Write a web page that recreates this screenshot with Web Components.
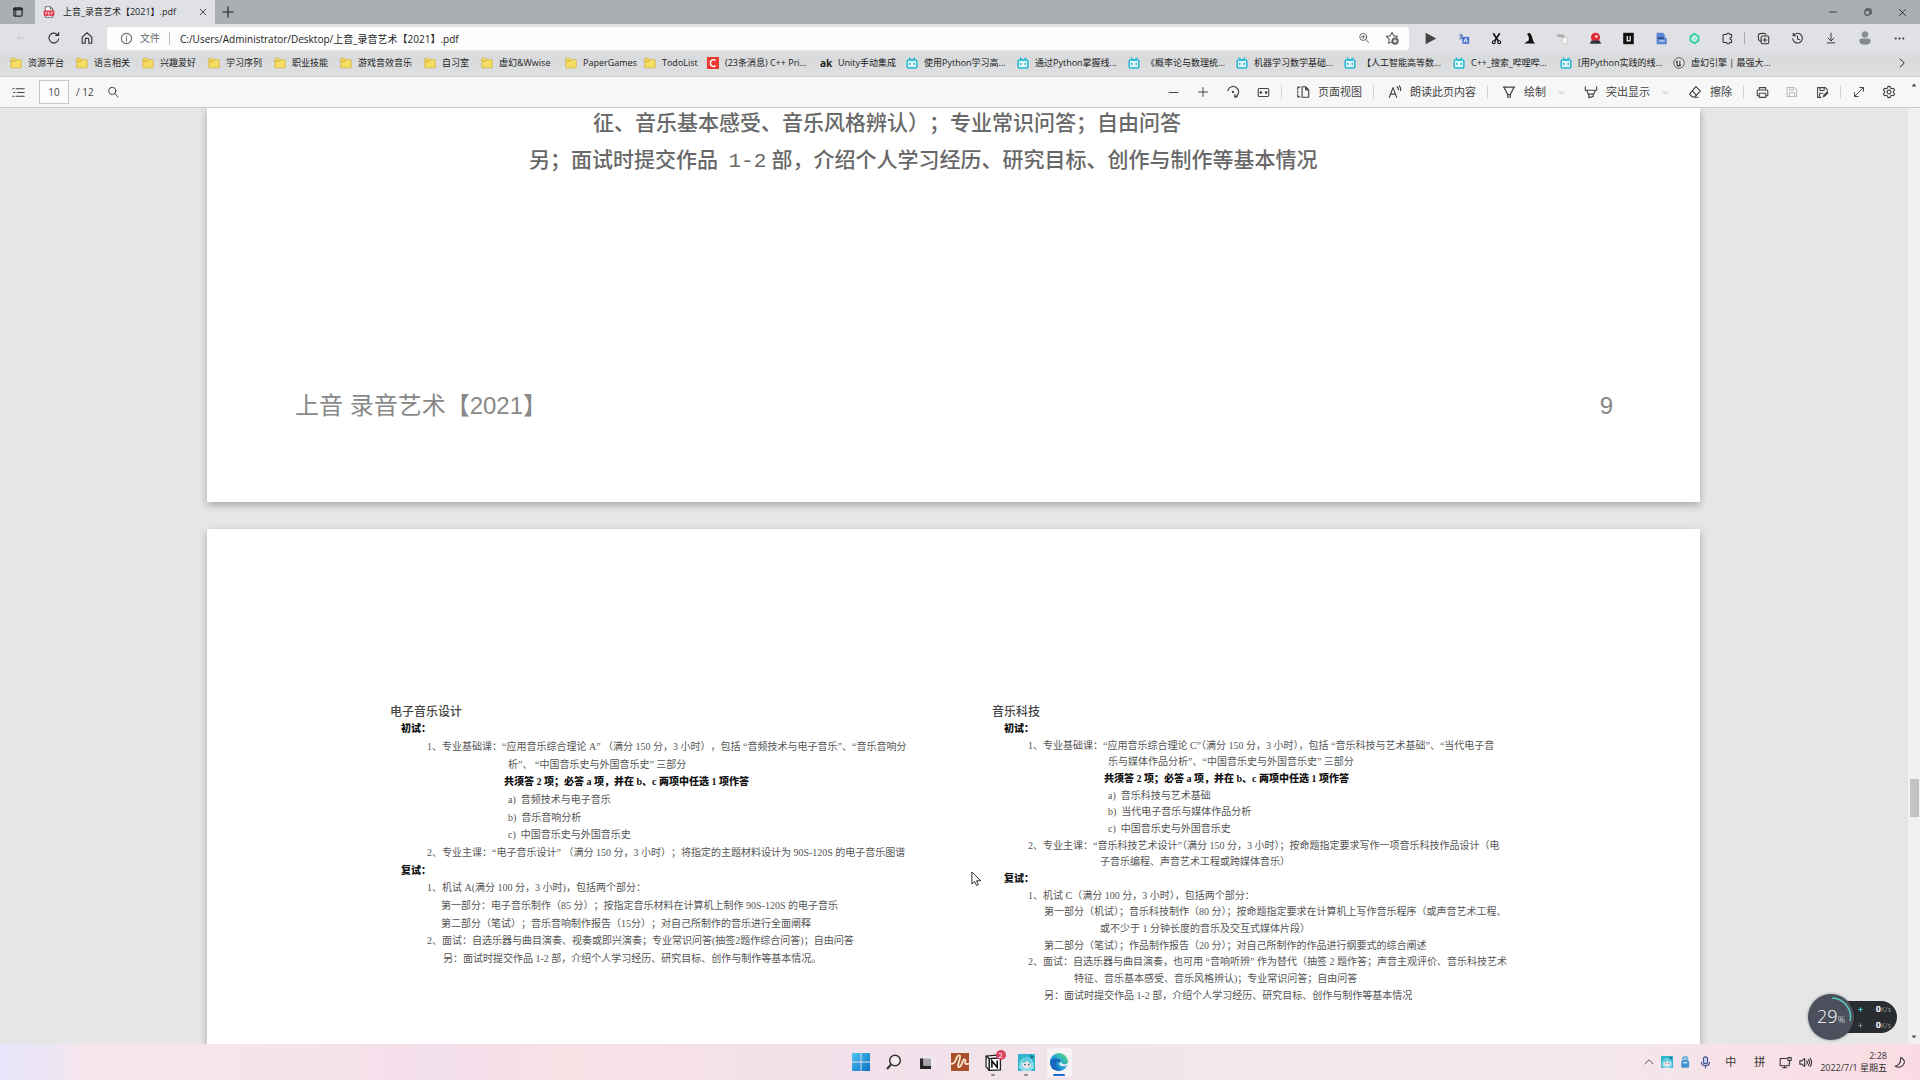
<!DOCTYPE html>
<html lang="zh-CN">
<head>
<meta charset="utf-8">
<title>上音_录音艺术【2021】.pdf</title>
<style>
html,body{height:100%}
body{margin:0;overflow:hidden;font-family:"Open Sans","Noto Sans CJK SC",sans-serif;font-size:9px;color:#222;text-spacing-trim:space-all}
</style>
</head>
<body>
<desktop-screen></desktop-screen>
<script>
const S='fill="none" stroke="currentColor" stroke-width="1.3" stroke-linecap="round" stroke-linejoin="round"';
const ICONS={
tabs:`<g ${S}><rect x="2.5" y="2.5" width="11" height="11" rx="1.5" stroke-width="1.6"/><path d="M2.5 4.2h11" stroke-width="2.6"/><path d="M5 3v10"/></g>`,
pdf:`<path d="M3 1h7l3 3v11H3z" fill="#fff" stroke="#444"/><path d="M10 1v3h3" fill="none" stroke="#444"/><rect x="1" y="6" width="14" height="7" rx="1" fill="#e0243c"/><path d="M3.5 11.500V8h1.200q1 0 1 1t-1 1H3.500M7.500 8v3.500h.7q1.200 0 1.200-1.700T8.200 8zM11.500 11.500V8h2M11.500 9.700h1.500" fill="none" stroke="#fff" stroke-width=".9"/>`,
close:`<path ${S} d="M3.500 3.500l9 9M12.500 3.500l-9 9"/>`,
plus:`<path ${S} d="M8 2v12M2 8h12"/>`,
minus:`<path ${S} d="M2.500 8h11"/>`,
restore:`<g ${S}><rect x="3" y="5" width="8" height="8" rx="1.500"/><path d="M5.500 3h5.500q2 0 2 2v5.500"/></g>`,
back:`<path ${S} d="M13 8H3M7 4L3 8l4 4"/>`,
refresh:`<path ${S} d="M13.300 9.300A5.600 5.600 0 1 1 12 4.200M13.300 1.800v3.200h-3.300"/>`,
home:`<path ${S} d="M2.500 7L8 2l5.500 5v7h-3.500V9.500q0-1-1-1H7q-1 0-1 1V14H2.500z"/>`,
info:`<g ${S} stroke-width="1"><circle cx="8" cy="8" r="6.300"/><path d="M8 7.200v4M8 4.800v.3"/></g>`,
zoomin:`<g ${S}><circle cx="7" cy="6.500" r="4.700"/><path d="M10.500 10l3.500 4M7 4.500v4M5 6.500h4"/></g>`,
star:`<g ${S}><path d="M8.500 12.300L4 14l.8-4.600L1.500 6.200 6 5.600 8 1.500l2 4.100 4.300.6-1 1.100"/><circle cx="11.500" cy="11.500" r="3.500" fill="#555"/><path d="M11.500 9.800v3.400M9.800 11.500h3.400" stroke="#fff"/></g>`,
play:`<path d="M2 1l13 7-13 7z" fill="#444"/>`,
trans:`<path d="M2.500 4h5M5 2v2M3 9q3-1 3.500-5M4 5.500q1 2 3 3" fill="none" stroke="#5a78c8" stroke-width="1.300"/><rect x="6.500" y="6" width="8.500" height="8.500" fill="#4d6fd0"/><path d="M8.500 13l2.200-5.500 2.200 5.500M9.200 11h3" fill="none" stroke="#fff"/>`,
cut:`<path d="M4 1.500l6.300 9.500M12 1.500L5.700 11" fill="none" stroke="#111" stroke-width="2"/><circle cx="4.700" cy="12.500" r="1.800" fill="none" stroke="#111" stroke-width="1.400"/><circle cx="11.300" cy="12.500" r="1.800" fill="none" stroke="#111" stroke-width="1.400"/>`,
bird:`<path d="M5 2l3-1 2 2 1.500 4 1 4.500 2.500 2.500H1.500L4.500 12 7 10.500V6z" fill="#111"/><path d="M5 5l2 3-1.500 3L4 9z" fill="#eee"/>`,
paste:`<path d="M1.500 3h7l2 2v3H8L6.500 6h-5z" fill="#aaa"/><rect x="7.500" y="7" width="6.500" height="7.500" rx="1.500" fill="#f5f5f5" stroke="#c5c5c5"/>`,
siren:`<circle cx="8" cy="6.500" r="5.600" fill="#e02836"/><circle cx="9" cy="5.500" r="1.800" fill="#ffc0c4"/><path d="M3 10.500h10l2 4h-14z" fill="#2f3440"/>`,
black:`<rect x="1.500" y="1" width="13" height="14" fill="#111"/><path d="M6.500 5v6h3.500M10 5v6" fill="none" stroke="#fff" stroke-width="1.500"/>`,
doc:`<path d="M2 1h8l2 2v4h2.500v8H2z" fill="#5b83d6"/><path d="M3 7.500h8" stroke="#273a63" stroke-width="1.600"/><path d="M5 11h7" stroke="#cfdcf7" stroke-width="1.500"/>`,
green:`<path d="M8 2L13 5.500v5L8 14l-5-3.500v-5z" fill="none" stroke="#24d3a0" stroke-width="2.200"/><circle cx="8" cy="8" r="2" fill="#8fe"/>`,
puzzle:`<path ${S} d="M4 3h3q.3-1.700 1.800-1.700T10.500 3H13v3.500q-2 0-2 1.600t2 1.600V13h-2.500q-.4 1.700-1.800 1.700T7 13H4q-1.500 0-1.500-1.500V4.500Q2.500 3 4 3z"/>`,
coll:`<g ${S}><rect x="5" y="5" width="9.500" height="9.500" rx="2"/><path d="M9.700 7.500v4.600M7.500 9.800h4.500M5 11q-2.500.5-3-1.500L1.500 4.500q0-2 2-2.500l5-.5q2 0 2.500 2"/></g>`,
hist:`<path ${S} d="M3 4.200A6 6 0 1 1 2 8M2.800 1.500v3h3M8 5v3.500l2.500 1"/>`,
down:`<path ${S} d="M8 1.500v10M4 8l4 4 4-4M3 14.500h10"/>`,
avatar:`<circle cx="8" cy="4" r="3.700" fill="#8b8f93"/><path d="M1.500 11q0-2.500 2.500-2.500h8q2.500 0 2.500 2.500 0 4.500-6.500 4.500T1.500 11z" fill="#85898d"/>`,
more:`<g fill="currentColor"><circle cx="2.500" cy="8" r="1.500"/><circle cx="8" cy="8" r="1.500"/><circle cx="13.500" cy="8" r="1.500"/></g>`,
folder:`<path d="M1 2.500Q1 1.500 2 1.500h4.500l2 2H14q1 0 1 1v9q0 1-1 1H2q-1 0-1-1z" fill="#f4dd62" stroke="#c9ab35" stroke-width=".8"/><path d="M1.500 5.500h5l2-2" fill="none" stroke="#b8962a"/>`,
csdn:`<rect width="16" height="16" fill="#e8382f"/><path d="M11.500 4.500Q10 3.500 8 3.500 4.500 4 4.500 8T8 12.500q2 0 3.500-1" fill="none" stroke="#fff" stroke-width="2"/>`,
bili:`<g fill="none" stroke="#22b9d2" stroke-width="2" stroke-linecap="round"><rect x="1.500" y="4" width="13" height="10.500" rx="2" fill="#dff6fa"/><path d="M4.500 1.500L6.500 4M11.500 1.500L9.500 4M5 8.500v1M11 8.500v1"/></g>`,
unreal:`<circle cx="8" cy="8" r="7" fill="#e8e8e8" stroke="#333"/><path d="M4 5.500q1.500-.8 2-1.500v6q1 1.500 2.500.5V5q1-.5 1.300-1v6.500l2-.8q-1 2.800-4 2.800T4.800 10.500z" fill="#222"/>`,
chevr:`<path ${S} d="M5.500 2.500L11 8l-5.500 5.500"/>`,
chevd:`<path ${S} stroke-width="2" d="M3 6l5 5 5-5"/>`,
chevu:`<path ${S} stroke-width="2" d="M1.500 11L8 4.500l6.500 6.500"/>`,
list:`<path ${S} stroke-linecap="butt" d="M5 3.500h10M6.500 8H15M5 12.500h10M1 3.500h1.500M2 8h1.500M1 12.500h1.500"/>`,
search:`<g ${S}><circle cx="7" cy="6.500" r="4.800"/><path d="M10.500 10l4 4.500"/></g>`,
rotate:`<g ${S}><path d="M2 6.500A6.300 6.300 0 1 1 10 14M13 13.500L10 14l.3-3.300"/></g><circle cx="8" cy="8" r="1.300" fill="currentColor"/>`,
fit:`<g ${S}><rect x="1.500" y="3" width="13" height="10" rx="1.500"/><path d="M6 8H3.500M5 6.500L3.500 8 5 9.500M10 8h2.500M11 6.500L12.500 8 11 9.500"/></g>`,
pages:`<path ${S} d="M7 2h4l3.500 3.500V14H7zM11 2v3.500h3.500M4.500 2.500H2V5M2 7v2M2 11v2.500h2.500"/>`,
read:`<path ${S} d="M1.500 14L5.700 3l4.200 11M3 10.500h5.500M10.500 2q1.500 1.500 1.500 3.500M13 1q2 2.500 1.500 5.500"/>`,
pen:`<path ${S} d="M1.500 2.500h13M2.500 3L6.500 11v3h3v-3l4-8M6.500 11h3"/>`,
marker:`<path ${S} d="M1.500 2v4h13V2M3 6l2 4.500h6L13 6M5.500 10.500v4l5-1.500v-2.500"/>`,
eraser:`<path ${S} d="M9 1.800l5.200 5.200-6.700 6.700H5L1.800 10.500zM4.800 6.800l5 5M7.500 14h4"/>`,
print:`<path ${S} d="M4 5V2h8v3M4 12H1.500V6.500q0-1.500 1.500-1.500h10q1.500 0 1.500 1.500V12H12M4 9h8v5H4z"/>`,
save:`<path ${S} d="M2 2h9.500L14 4.500V14H2zM5 2v3.500h5V2M4.500 14V9h7v5"/>`,
saveas:`<path ${S} stroke-width="1.700" d="M6 14H2V2h9.500L14 4.500V6M5 2v3.500h5V2M4.500 13V9h4"/><path d="M8 14.500l1-3.500L13.500 6.500l2 2L11 13z" fill="currentColor"/>`,
expand:`<path ${S} d="M2 14L14 2M9 2h5v5M2 9v5h5"/>`,
gear:`<g ${S}><path d="M6.800 1.500h2.400l.5 2 1.500.8 2-.6 1.200 2.100-1.400 1.500v1.400l1.400 1.500-1.200 2.100-2-.6-1.500.8-.5 2H6.800l-.5-2-1.500-.8-2 .6-1.200-2.100L3 8.700V7.300L1.600 5.800l1.200-2.100 2 .6 1.500-.8z"/><circle cx="8" cy="8" r="2.200"/></g>`,
up:`<path d="M3 11l5-6 5 6z" fill="#555"/>`,
dn:`<path d="M3 5l5 6 5-6z" fill="#555"/>`,
win:`<defs><linearGradient id="w" x2="1" y2="1"><stop stop-color="#4fc6f2"/><stop offset="1" stop-color="#0a6fc4"/></linearGradient></defs><path d="M0 0h7.600v7.600H0zM8.400 0H16v7.600H8.400zM0 8.400h7.600V16H0zM8.400 8.400H16V16H8.400z" fill="url(#w)"/>`,
tsearch:`<circle cx="9" cy="6.500" r="5.300" fill="#f7edf2" stroke="#333" stroke-width="1.500"/><path d="M5 10.500L1 15" stroke="#333" stroke-width="2"/>`,
tview:`<rect x="4.500" y="2" width="11" height="10" fill="#eeeaee"/><path d="M1 4.500h3.500v7H12V15H1z" fill="#252528"/><rect x="4.500" y="4.500" width="7.500" height="7" fill="#a7a5aa"/>`,
wave:`<rect width="16" height="16" fill="#a9502b"/><path d="M0 9.500Q3 10 4.500 5.500T8 2.500Q8.500 3 7 8T7.500 12.500Q9 12 10 8.500t2.500-2.500q.5.500 0 2.500t3.500 1" fill="none" stroke="#fbe6d0" stroke-width="1.600"/>`,
notion:`<path d="M1 2l10-1 3.500 2.500V15L4 15.500 1 12z" fill="#fff" stroke="#222" stroke-width="1.200"/><path d="M1 2l3 2.500 10.500-1M4 4.500v11" fill="none" stroke="#222" stroke-width="1.500"/><path d="M6.500 13V6.500l5 6V6" fill="none" stroke="#111" stroke-width="1.500"/>`,
anime:`<rect width="16" height="16" rx="1" fill="#2fb4cd"/><path d="M1 13Q1 3 8 3t7 10l-3 3H4z" fill="#8fdde9"/><circle cx="8" cy="9.500" r="4" fill="#f6e9ec"/><path d="M3 8q2-5 5-4 4-1 5 5-3 0-4-3-2 3-6 2z" fill="#5dc9dc"/><circle cx="6.500" cy="10" r=".8" fill="#357"/><circle cx="10" cy="10" r=".8" fill="#357"/><path d="M11 1l4 1-2 3z" fill="#146e86"/>`,
edge:`<defs><linearGradient id="e" x1="0" y1="1" x2="1" y2="0"><stop stop-color="#1470c8"/><stop offset=".5" stop-color="#22a5d8"/><stop offset="1" stop-color="#5ede6a"/></linearGradient></defs><circle cx="8" cy="8" r="8" fill="url(#e)"/><path d="M0 8.500Q1 5 5 4.700q4 0 4.500 3.300-4-1-4 2.500 0 3 4 5-9 1.500-9.500-7z" fill="#1767bd"/><path d="M9.500 8q-2 1.500-.5 3 2 1.300 6 .2l1-1V8.500q-.5 1.500-3 1.700-2.500 0-3.500-2.200z" fill="#f5eaf0"/>`,
usb:`<rect x="5" y="1" width="6.500" height="5" rx="1" fill="#8cc8ec" stroke="#4a90c4"/><rect x="3" y="6" width="10.500" height="9.500" rx="1.500" fill="#3f94d0"/><path d="M5.500 9h5.500" stroke="#dff" stroke-width="1.500"/>`,
mic:`<g fill="none" stroke="#3e4f8c" stroke-width="1.400"><rect x="5.500" y="1" width="5" height="8.500" rx="2.500" fill="#cfd8f3"/><path d="M3 7.500q0 4.500 5 4.500t5-4.500M8 12v3"/></g>`,
net:`<path ${S} d="M9.500 3H1.500v9h11V9M7 12v2.500M4.500 14.500h5M11 2h4v3.500h-4zM13 5.500V9"/>`,
sound:`<path ${S} d="M1 6h2.500L7 3v10l-3.500-3H1zM9.500 6q1.500 2 0 4M11.500 4.500q3 3.500 0 7M13.500 3q4 5 0 10"/>`,
moon:`<path ${S} d="M9.500 1.500Q16 5 13 10.500 9 16 2.500 12.500 10 11 9.500 1.500z"/>`,
cursor:`<path d="M2 1v13l3-2.800 2 4.300 2-.9-2-4.200h4.300z" fill="#fff" stroke="#222" stroke-width="1"/>`,
arru:`<path d="M8 1v14M1 8h14" stroke="#4cc" stroke-width="3.500"/>`,
arrd:`<path d="M8 1v14M1 8h14" stroke="#7a8a8a" stroke-width="3.500"/>`
};
const def=(tag,html,init)=>customElements.define(tag,class extends HTMLElement{
  constructor(){super();this.attachShadow({mode:'open'})}
  connectedCallback(){
    const t=document.createElement('template');
    t.innerHTML=typeof html==='function'?html(this):html;
    this.shadowRoot.replaceChildren(t.content.cloneNode(true));
    if(init)init(this);
  }
});
const RESET=`:host,*{box-sizing:border-box}button{font:inherit;color:inherit;background:none;border:0;padding:0;margin:0;display:flex;align-items:center;justify-content:center}`;
const btn=(name,label,size=13)=>`<button aria-label="${label}"><ui-icon name="${name}" size="${size}"></ui-icon></button>`;

def('ui-icon',el=>{const s=el.getAttribute('size')||12;return `<style>:host{display:block;flex:none;width:${s}px;height:${s}px}svg{display:block}</style><svg width="${s}" height="${s}" viewBox="0 0 16 16" aria-hidden="true">${ICONS[el.getAttribute('name')]||''}</svg>`});

def('tab-strip',`<style>${RESET}
:host{display:flex;height:24px;background:#a9afb3;color:#222}
.side button{width:35px;height:24px}
.tab{display:flex;align-items:center;gap:8px;width:180px;padding:0 6px 0 8px;background:#dfe1e4;white-space:nowrap}
.tab span{flex:1}.tab button{width:12px;height:20px}
.new{width:26px}.win{margin-left:auto;display:flex}.win button{width:35px}
</style>
<div class="side">${btn('tabs','标签操作',12)}</div>
<div class="tab"><ui-icon name="pdf" size="12"></ui-icon><span>上音_录音艺术【2021】.pdf</span>${btn('close','关闭标签页',10)}</div>
<button class="new" aria-label="新建标签页"><ui-icon name="plus" size="14"></ui-icon></button>
<div class="win">${btn('minus','最小化',10)}${btn('restore','还原',10)}${btn('close','关闭',11)}</div>`);

def('address-row',`<style>${RESET}
:host{display:flex;align-items:center;height:28px;background:#dfe1e4;padding-right:4px;color:#333}
.nav{display:flex;padding:0 4px}.nav button{width:33px;height:24px}.nav .off{opacity:.12}
.box{display:flex;align-items:center;flex:1;height:23px;margin-right:5px;padding:0 3px 0 13px;background:#fdfdfd;border-radius:3px;font-size:10px}
.box label{display:flex;align-items:center;gap:7px;color:#666;padding-right:9px;border-right:1px solid #bbb;line-height:12px}
input{flex:1;border:0;background:none;outline:0;font:inherit;color:#222;padding:0 0 0 10px;height:20px}
.box button{width:28px;color:#666}
.ext button{width:33px;height:24px}.ext{display:flex;align-items:center}
i{width:1px;height:12px;background:#aaa;margin:0 1px 0 0}
.ext i~button{width:34px}
</style>
<div class="nav"><button class="off" aria-label="后退"><ui-icon name="back"></ui-icon></button>${btn('refresh','刷新',14)}${btn('home','主页',14)}</div>
<div class="box"><label for="u"><ui-icon name="info" size="13"></ui-icon>文件</label><input id="u" value="C:/Users/Administrator/Desktop/上音_录音艺术【2021】.pdf">${btn('zoomin','缩放',12)}${btn('star','收藏',14)}</div>
<div class="ext">${['play','trans','cut','bird','paste','siren','black','doc','green','puzzle'].map(n=>btn(n,n,13)).join('')}<i></i>${btn('coll','集锦')}${btn('hist','历史记录')}${btn('down','下载',12)}${btn('avatar','个人资料',14)}${btn('more','更多',11)}</div>`);

def('book-mark',el=>`<style>
:host{display:block}
a{display:flex;align-items:center;gap:6px;color:inherit;text-decoration:none;white-space:nowrap}
span{width:${el.getAttribute('w')}px}b{width:12px;font:bold 10px/12px "Open Sans",sans-serif}
</style><a href="#">${el.getAttribute('icon')==='ak'?'<b aria-hidden="true">ak</b>':`<ui-icon name="${el.getAttribute('icon')}"></ui-icon>`}<span><slot></slot></span></a>`);

const MARKS=[['folder',36,'资源平台'],['folder',36,'语言相关'],['folder',36,'兴趣爱好'],['folder',36,'学习序列'],['folder',36,'职业技能'],['folder',54,'游戏音效音乐'],['folder',27,'自习室'],['folder',54,'虚幻&amp;Wwise'],['folder',49,'PaperGames'],['folder',33,'TodoList'],['csdn',83,'(23条消息) C++ Pri...'],['ak',56,'Unity手动集成'],['bili',81,'使用Python学习高...'],['bili',81,'通过Python掌握线...'],['bili',78,'《概率论与数理统...'],['bili',78,'机器学习数学基础...'],['bili',79,'【人工智能高等数...'],['bili',77,'C++_搜索_哔哩哔...'],['bili',83,'[用Python实践的线...'],['unreal',78,'虚幻引擎 | 最强大...']];
def('bookmark-bar',`<style>${RESET}
:host{display:flex;align-items:center;height:25px;padding:0 12px 2px 10px;background:linear-gradient(#dcdee0,#d9dadb 30%,#dfe0e1);border-bottom:1px solid #cfcfd1}
nav{display:flex;gap:12px}button{margin-left:auto}
</style><nav>${MARKS.map(m=>`<book-mark icon="${m[0]}" w="${m[1]}">${m[2]}</book-mark>`).join('')}</nav>${btn('chevr','更多书签',12)}`);

def('tool-button',el=>`<style>${RESET}
:host{display:block}
button{height:28px;padding:0 ${el.hasAttribute('menu')?0:8}px 0 4px;white-space:nowrap;font-size:11px}
.i{width:28px;margin-right:1px;display:flex;justify-content:center}.c{width:27px;padding-left:4px;display:flex;justify-content:center;color:#888}
</style><button><span class="i"><ui-icon name="${el.getAttribute('icon')}" size="14"></ui-icon></span><slot></slot>${el.hasAttribute('menu')?'<span class="c"><ui-icon name="chevd" size="7"></ui-icon></span>':''}</button>`);

def('pdf-toolbar',`<style>${RESET}
:host{display:flex;align-items:center;height:31px;background:#f8f7f8;border-bottom:1px solid #c9c9cb;padding:0 16px 0 3px;color:#444}
button{width:30px;height:28px}
form{display:flex;align-items:center;padding-left:6px;gap:7px;font-size:10px}
input{width:30px;height:24px;border:1px solid #c8c8c8;background:#fdfdfd;text-align:center;font:inherit;color:#444;padding:0}
.tools{margin-left:auto;display:flex;align-items:center}
i{width:1px;height:14px;background:#d2d2d4;margin:0 3px}
.off{opacity:.35}form+button{margin-left:4px}
</style>
${btn('list','目录',13)}<form><input aria-label="页码" value="10"><span>/ 12</span></form>${btn('search','查找',12)}
<div class="tools">${btn('minus','缩小',13)}${btn('plus','放大',12)}${btn('rotate','旋转',14)}${btn('fit','适应宽度',13)}<i></i><tool-button icon="pages">页面视图</tool-button><i></i><tool-button icon="read">朗读此页内容</tool-button><i></i><tool-button icon="pen" menu>绘制</tool-button><tool-button icon="marker" menu>突出显示</tool-button><tool-button icon="eraser">擦除</tool-button><i></i>${btn('print','打印')}<span class="off">${btn('save','保存',12)}</span>${btn('saveas','另存为')}<i></i>${btn('expand','全屏',12)}${btn('gear','设置',14)}</div>`);

def('pdf-page',`<style>:host{display:block;background:#fff;box-shadow:0 3px 8px rgba(0,0,0,.28)}</style><slot></slot>`);

def('exam-section',el=>{
 const L=JSON.parse(el.querySelector('script').textContent);
 return `<style>
:host{display:grid;grid-auto-rows:1fr;align-items:center;height:${el.getAttribute('tall')}px;font:10px/14px "Liberation Serif","Noto Sans CJK SC",serif;color:#555;white-space:pre}
:host([trim]){text-spacing-trim:normal}
p,h2,h3{margin:0;font-size:10px}
h2{font:500 12px/14px "Liberation Sans","Noto Sans CJK SC",sans-serif;color:#444}
h3,b{color:#111;font-weight:900}
</style>`+L.map(([x,t,k])=>k==='t'?`<h2>${t}</h2>`:k==='h'?`<h3 style="padding-left:${x}px">${t}</h3>`:`<p style="padding-left:${x}px">${k?`<b>${t}</b>`:t}</p>`).join('')});

def('pdf-viewer',`<style>
:host{display:flex;min-height:0;flex:1;background:#e6e6e6;position:relative}
main{flex:1;min-width:0;overflow:hidden;display:flex;flex-direction:column;gap:27px;padding:0 208px 0 207px}
.prev{flex:none;padding:0 87px 0 88px}
.prev .t{margin:0;padding-left:234px;font:500 21px/37px "Liberation Serif","Noto Sans CJK SC",serif;color:#686868;white-space:pre;height:74px;margin-top:-3px}
.prev .n{font-family:"Liberation Mono",monospace}
.prev footer{display:flex;justify-content:space-between;padding-top:209px;height:323px;box-sizing:border-box;font:24px/36px "Liberation Sans","Noto Sans CJK SC",sans-serif;color:#888}
.next{flex:none;padding:174px 0 80px 183px}
.cols{display:grid;grid-template-columns:602px 1fr;align-items:start}
.cols exam-section+exam-section{margin-top:1px}
.bar{width:12px;background:#f1f1f3;display:flex;flex-direction:column;align-items:center}
.bar:before{content:"";order:2;width:9px;height:38px;background:#c4c4c6;margin-top:671px}
.bar .dn{order:3;margin-top:auto;margin-bottom:3px}
.bar .up{height:0;margin-top:-27px;height:27px}
.cursor{position:absolute;left:970px;top:763px}
</style>
<main>
<pdf-page class="prev"><p class="t"><span style="padding-left:64px">征、音乐基本感受、音乐风格辨认）；专业常识问答；自由问答</span>
另；面试时提交作品  <span class="n">1-2</span> 部，介绍个人学习经历、研究目标、创作与制作等基本情况</p>
<footer><span>上音 录音艺术【2021】</span><span>9</span></footer></pdf-page>
<pdf-page class="next"><div class="cols">
<exam-section tall="265"><script type="application/json">[[0,"电子音乐设计","t"],[11,"初试：","h"],[37,"1、专业基础课：“应用音乐综合理论 A” （满分 150 分，3 小时），包括 “音频技术与电子音乐”、“音乐音响分"],[118,"析”、 “中国音乐史与外国音乐史” 三部分"],[114,"共须答 2 项；必答 a 项，并在 b、c 两项中任选 1 项作答","b"],[118,"a)  音频技术与电子音乐"],[118,"b)  音乐音响分析"],[118,"c)  中国音乐史与外国音乐史"],[37,"2、专业主课：“电子音乐设计” （满分 150 分，3 小时）；将指定的主题材料设计为 90S-120S 的电子音乐图谱"],[11,"复试：","h"],[37,"1、机试 A(满分 100 分，3 小时)，包括两个部分："],[51,"第一部分：电子音乐制作（85 分）；按指定音乐材料在计算机上制作 90S-120S 的电子音乐"],[51,"第二部分（笔试）；音乐音响制作报告（15分）；对自己所制作的音乐进行全面阐释"],[37,"2、面试：自选乐器与曲目演奏、视奏或即兴演奏；专业常识问答(抽签2题作综合问答)；自由问答"],[53,"另：面试时提交作品 1-2 部，介绍个人学习经历、研究目标、创作与制作等基本情况。"]]<\/script></exam-section>
<exam-section tall="300" trim><script type="application/json">[[0,"音乐科技","t"],[12,"初试：","h"],[36,"1、专业基础课：“应用音乐综合理论 C”（满分 150 分，3 小时），包括 “音乐科技与艺术基础”、“当代电子音"],[116,"乐与媒体作品分析”、“中国音乐史与外国音乐史” 三部分"],[112,"共须答 2 项；必答 a 项，并在 b、c 两项中任选 1 项作答","b"],[116,"a)  音乐科技与艺术基础"],[116,"b)  当代电子音乐与媒体作品分析"],[116,"c)  中国音乐史与外国音乐史"],[36,"2、专业主课：“音乐科技艺术设计”（满分 150 分，3 小时）；按命题指定要求写作一项音乐科技作品设计（电"],[108,"子音乐编程、声音艺术工程或跨媒体音乐）"],[12,"复试：","h"],[36,"1、机试 C（满分 100 分，3 小时），包括两个部分："],[52,"第一部分（机试）；音乐科技制作（80 分）；按命题指定要求在计算机上写作音乐程序（或声音艺术工程、"],[108,"或不少于 1 分钟长度的音乐及交互式媒体片段）"],[52,"第二部分（笔试）；作品制作报告（20 分）；对自己所制作的作品进行纲要式的综合阐述"],[36,"2、面试：自选乐器与曲目演奏，也可用 “音响听辨” 作为替代（抽签 2 题作答；声音主观评价、音乐科技艺术"],[82,"特征、音乐基本感受、音乐风格辨认)；专业常识问答；自由问答"],[52,"另：面试时提交作品 1-2 部，介绍个人学习经历、研究目标、创作与制作等基本情况"]]<\/script></exam-section>
</div></pdf-page>
</main>
<div class="bar"><ui-icon class="up" name="up" size="8"></ui-icon><ui-icon class="dn" name="dn" size="8"></ui-icon></div>
<ui-icon class="cursor" name="cursor" size="15"></ui-icon>`);

def('net-meter',`<style>
:host{position:absolute;right:23px;bottom:40px;display:flex;align-items:center}
.ball{position:relative;width:46px;height:46px;border-radius:50%;background:#4b505c;box-shadow:0 0 3px #0006;color:#fff;display:flex;align-items:baseline;justify-content:center;font:18px/44px "Open Sans",sans-serif;font-weight:300;z-index:1}
.ball small{font-size:9px}.ball svg{position:absolute;inset:0}
.pill{display:flex;flex-direction:column;justify-content:center;height:32px;width:51px;margin-left:-8px;padding:0 6px 0 12px;box-sizing:border-box;background:#292c30;border-radius:0 16px 16px 0;color:#aaa;font-size:8px;line-height:15px}
.pill div{display:flex;justify-content:space-between;align-items:center}.pill b{color:#fff;font-size:9px}
.pill small{font-size:7px;color:#999}
</style><div class="ball"><span>29</span><small>%</small><svg width="46" height="46" viewBox="0 0 46 46"><path d="M24 4A19 19 0 0 1 42 27" fill="none" stroke="#55c9bd" stroke-width="1.500"/></svg></div>
<div class="pill"><div><ui-icon name="arru" size="5"></ui-icon><span><b>0</b><small>K/s</small></span></div><div><ui-icon name="arrd" size="5"></ui-icon><span><b>0</b><small>K/s</small></span></div></div>`);

def('task-bar',`<style>${RESET}
:host{display:grid;grid-template-columns:1fr auto 1fr;align-items:center;height:36px;background:linear-gradient(90deg,#e9e4f9,#ebe5f5 50px,#f8e6ed 80px,#f6e2ea 340px,#f3deec 440px,#f7e2e6 560px,#f3e0ea 45%,#f1e6ea 60%,#f3e8ec 82%,#f8e0e6 93%,#fbdbe3)}
.apps{grid-column:2;display:flex}
.apps button{position:relative;width:33px;height:36px}
.apps .on:after{content:"";position:absolute;bottom:4px;width:4px;height:2px;border-radius:1px;background:#888}
.apps .act:before{content:"";position:absolute;inset:4px 4px 3px;background:#fff8;border-radius:2px}
.apps .act:after{width:12px;background:#1a6fd0}
.apps .act ui-icon{position:relative}
.badge{position:absolute;right:4px;top:6px;width:10px;height:10px;border-radius:50%;background:#d9435f;color:#fff;font:8px/10px "Open Sans",sans-serif}
.tray{display:flex;justify-content:flex-end;align-items:center;padding-right:12px;color:#333}
.tray button{width:18px;height:30px}.tray .w{width:22px}.tray .im{width:29px;font-size:11px}
time{text-align:right;font-size:9px;line-height:12px;margin:0 3px 0 6px}
</style>
<div class="apps">${btn('win','开始',18)}${btn('tsearch','搜索',16)}${btn('tview','任务视图',16)}${btn('wave','音频编辑',18)}<button class="on" aria-label="Notion"><ui-icon name="notion" size="17"></ui-icon><span class="badge">2</span></button><button class="on" aria-label="应用"><ui-icon name="anime" size="17"></ui-icon></button><button class="on act" aria-label="Edge"><ui-icon name="edge" size="18"></ui-icon></button></div>
<div class="tray">${btn('chevu','隐藏的图标',10)}${btn('anime','应用',12)}${btn('usb','设备',12)}<button class="w" aria-label="麦克风"><ui-icon name="mic" size="13"></ui-icon></button><button class="im">中</button><button class="im">拼</button><button class="w" aria-label="网络"><ui-icon name="net" size="13"></ui-icon></button>${btn('sound','音量',13)}<time>2:28<br>2022/7/1 星期五</time>${btn('moon','专注',13)}</div>`);

def('desktop-screen',`<style>:host{display:flex;flex-direction:column;height:100vh;position:relative;line-height:12px}</style>
<tab-strip></tab-strip><address-row></address-row><bookmark-bar></bookmark-bar><pdf-toolbar></pdf-toolbar><pdf-viewer></pdf-viewer><task-bar></task-bar><net-meter></net-meter>`);
</script>
</body>
</html>
